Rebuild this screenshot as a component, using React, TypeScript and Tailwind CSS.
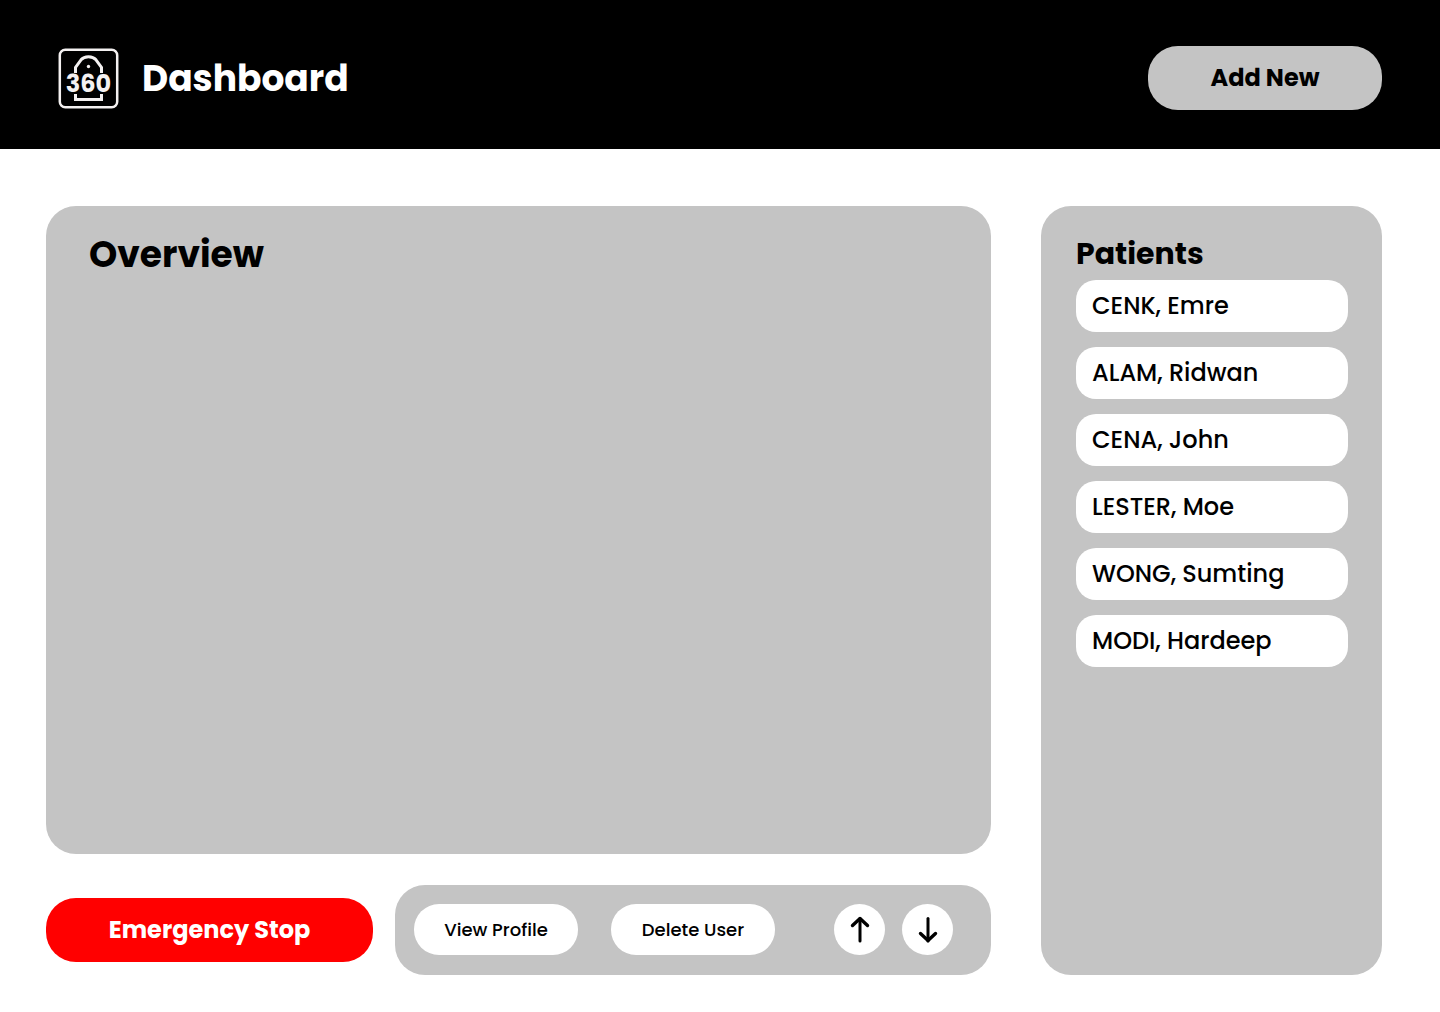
const patients = [
  "CENK, Emre",
  "ALAM, Ridwan",
  "CENA, John",
  "LESTER, Moe",
  "WONG, Sumting",
  "MODI, Hardeep",
];

function Logo() {
  return (
    <svg width="60" height="62" viewBox="0 0 60 62" role="img" aria-label="360" className="shrink-0 overflow-visible">
      <g fill="none" stroke="#f4f1f1" strokeWidth="2.5">
        <rect x="1.8" y="1.8" width="57.4" height="57.4" rx="5.5" />
        <path d="M17.500 25V19.500L23 11.800C26.500 7.700 34.500 7.700 38 11.800L43.500 19.500V25" strokeWidth="3" />
        <path d="M17.500 46V51.500H43.500V46" strokeWidth="3" />
      </g>
      <circle cx="30.500" cy="18.500" r="1.700" fill="#f4f1f1" />
      <text x="30.500" y="44" textAnchor="middle" fill="#f4f1f1" className="text-2xl font-bold">
        360
      </text>
    </svg>
  );
}

function Arrow({ down = false }: { down?: boolean }) {
  return (
    <svg
      width="25"
      height="29"
      viewBox="0 0 25 29"
      fill="none"
      stroke="black"
      strokeWidth="3"
      strokeLinecap="round"
      strokeLinejoin="round"
      aria-hidden="true"
    >
      <path d="M13 3.500V26" />
      <path d={down ? "M5.500 18.500L13 25.500L20.500 18.500" : "M5.500 10.500L13 3.500L20.500 10.500"} strokeWidth="3.400" />
    </svg>
  );
}

export default function App() {
  return (
    <div className="flex min-h-screen flex-col bg-white font-['Poppins','Inter',sans-serif] text-black">
      <header className="flex items-center justify-between bg-black px-[58px] pt-[46px] pb-[39px]">
        <div className="flex items-center gap-6 pt-[2px]">
          <Logo />
          <h1 className="text-4xl font-bold text-white">Dashboard</h1>
        </div>
        <button type="button" className="h-16 w-[234px] rounded-[30px] bg-[#c4c4c4] text-2xl font-bold">
          Add New
        </button>
      </header>

      <main className="flex flex-1 gap-[50px] pt-[57px] pr-[58px] pb-[37px] pl-[46px]">
        <div className="flex flex-1 flex-col gap-[31px]">
          <section className="flex-1 rounded-[30px] bg-[#c4c4c4] px-[43px] py-[29px]">
            <h2 className="text-4xl font-bold">Overview</h2>
          </section>
          <div className="flex items-center gap-[22px]">
            <button type="button" className="h-16 w-[327px] rounded-[30px] bg-[#ff0000] text-2xl font-bold text-white">
              Emergency Stop
            </button>
            <div className="flex flex-1 items-center justify-between rounded-[30px] bg-[#c4c4c4] pt-[19px] pr-[38px] pb-5 pl-[19px]">
              <div className="flex gap-[33px]">
                <button type="button" className="h-[51px] w-[164px] rounded-[25px] bg-white text-lg font-medium">
                  View Profile
                </button>
                <button type="button" className="h-[51px] w-[164px] rounded-[25px] bg-white text-lg font-medium">
                  Delete User
                </button>
              </div>
              <div className="flex gap-[17px]">
                <button type="button" aria-label="Move up" className="flex size-[51px] items-center justify-center rounded-full bg-white">
                  <Arrow />
                </button>
                <button type="button" aria-label="Move down" className="flex size-[51px] items-center justify-center rounded-full bg-white">
                  <Arrow down />
                </button>
              </div>
            </div>
          </div>
        </div>

        <aside className="w-[341px] rounded-[30px] bg-[#c4c4c4] pt-[30px] pr-[34px] pb-7 pl-[35px]">
          <h2 className="text-3xl font-bold">Patients</h2>
          <ul className="mt-2 flex flex-col gap-[15px]">
            {patients.map((name) => (
              <li key={name}>
                <button type="button" className="h-[52px] w-full rounded-[20px] bg-white px-4 text-left text-2xl font-medium">
                  {name}
                </button>
              </li>
            ))}
          </ul>
        </aside>
      </main>
    </div>
  );
}
